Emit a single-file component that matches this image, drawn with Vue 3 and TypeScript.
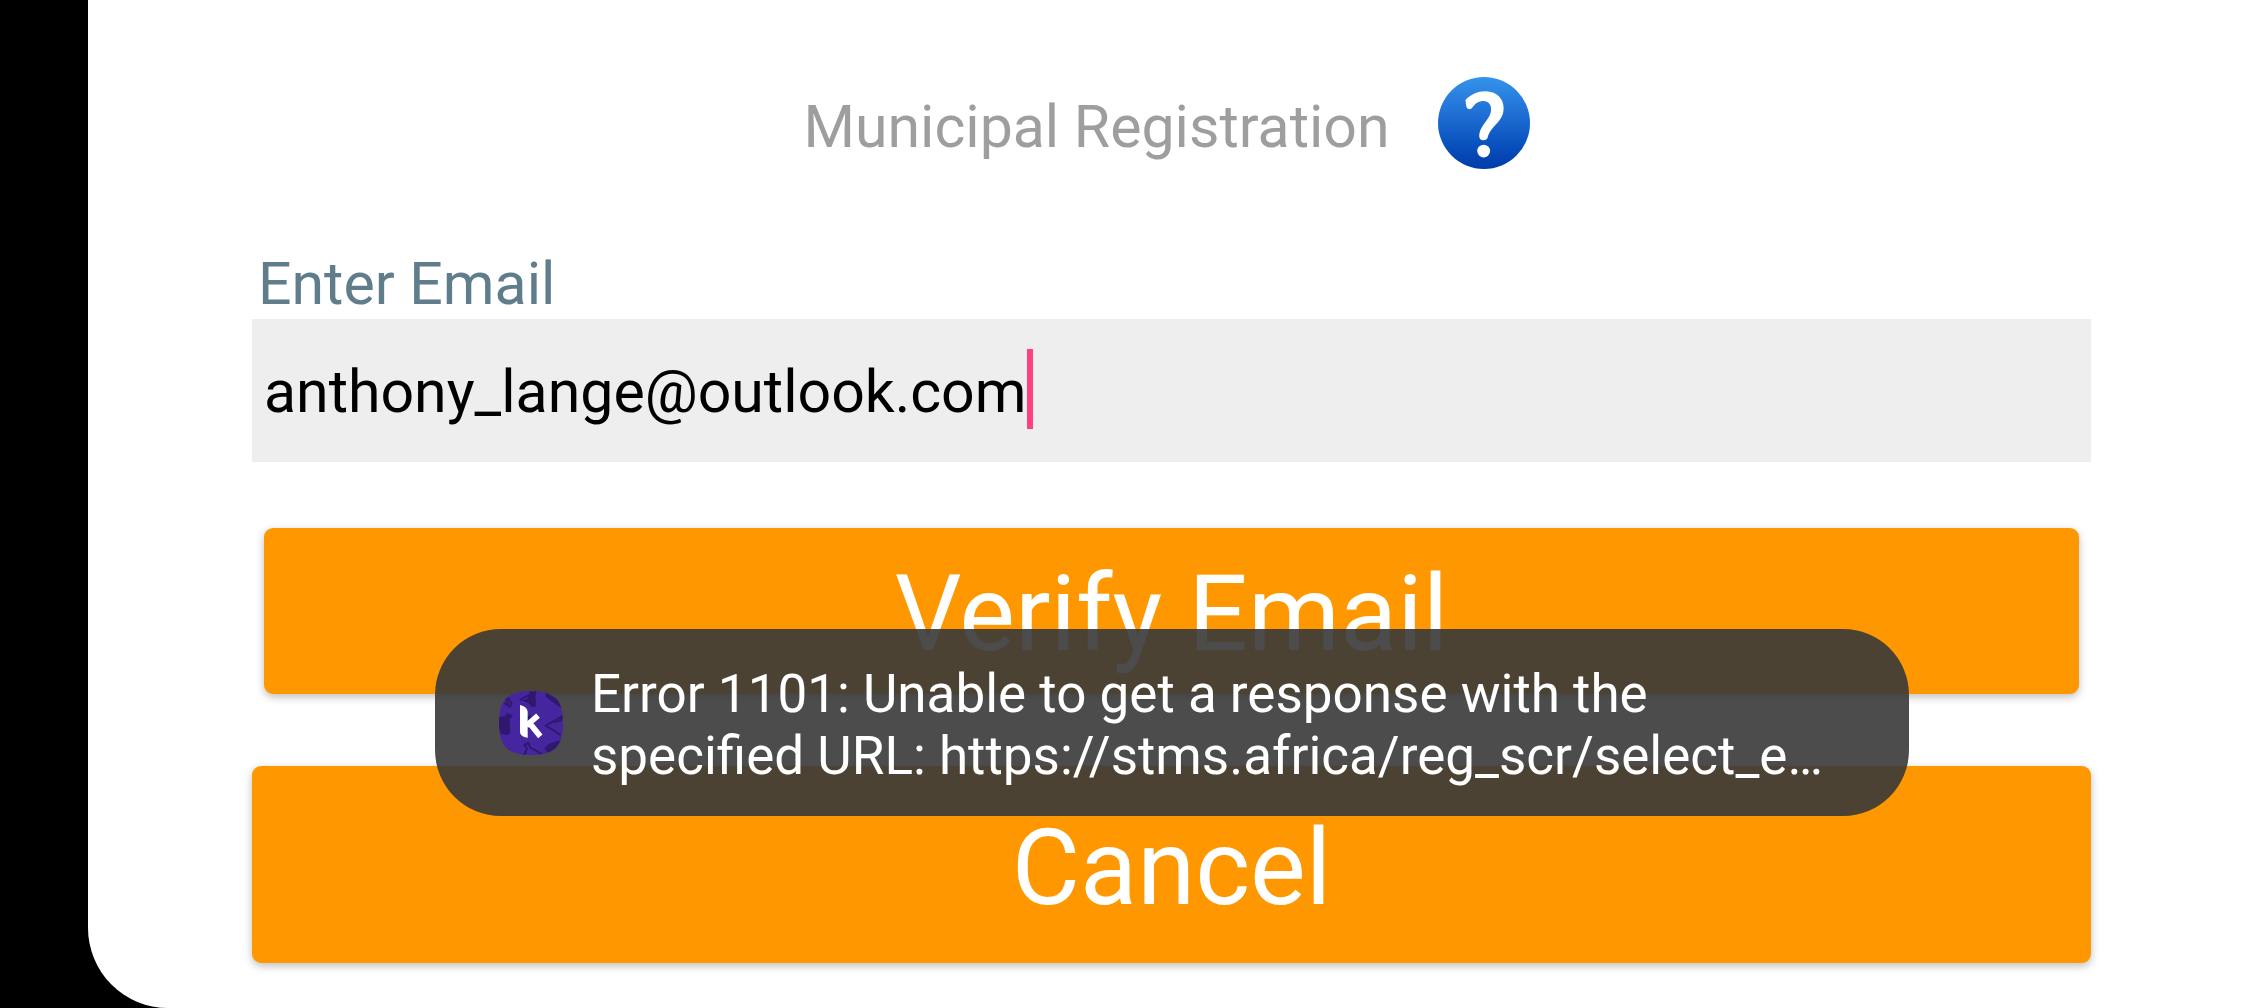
<script setup lang="ts">
import { ref } from 'vue'

const email = ref<string>('anthony_lange@outlook.com')
const toast = ref<string>(
  'Error 1101: Unable to get a response with the specified URL: https://stms.africa/reg_scr/select_e…',
)
</script>

<template>
  <div class="device">
    <main class="screen">
      <header class="heading">
        <h1 class="title">Municipal Registration</h1>
        <button class="help" type="button" aria-label="Help">
          <svg viewBox="0 0 272 272" aria-hidden="true">
            <defs>
              <linearGradient id="help-fill" x1="0" y1="0" x2="0" y2="1">
                <stop offset="0" stop-color="#3493ea" />
                <stop offset="0.35" stop-color="#2274d8" />
                <stop offset="0.75" stop-color="#0850bd" />
                <stop offset="1" stop-color="#003ca8" />
              </linearGradient>
            </defs>
            <circle cx="136" cy="136" r="136" fill="url(#help-fill)" />
            <path
              fill="#fff"
              d="M81 68C98 50 120 41 142 42C172 43 194 62 194 92C194 134 158 142 147 178C145 190 121 190 122 176C122 140 156 128 157 95C157 78 146 70 132 71C118 72 109 80 101 91C96 98 86 96 84 88Z"
            />
            <circle cx="135" cy="219" r="19" fill="#fff" />
          </svg>
        </button>
      </header>

      <form class="form" @submit.prevent>
        <label class="label" for="email">Enter Email</label>
        <div class="field">
          <input id="email" v-model="email" class="input" type="text" autocomplete="off" spellcheck="false" />
          <span class="caret"></span>
        </div>
        <button class="button verify" type="submit">Verify Email</button>
        <button class="button cancel" type="button">Cancel</button>
      </form>

      <div class="toast" role="alert">
        <svg class="logo" viewBox="0 0 192 192" aria-hidden="true">
          <defs>
            <clipPath id="logo-shape">
              <path d="M96 0C166 0 192 26 192 96S166 192 96 192S0 166 0 96S26 0 96 0Z" />
            </clipPath>
          </defs>
          <g clip-path="url(#logo-shape)">
            <rect width="192" height="192" fill="#45269f" />
            <g fill="#301870">
              <path d="M0 78L18 76L22 66L40 72L38 80L32 84L34 122L28 132L6 128L0 116Z" />
              <path d="M86 24L92 2L112 0L108 24L112 46L98 48L88 36L68 28Z" />
              <path d="M140 4L184 30L188 52L176 44L140 18Z" />
              <path d="M136 172L150 158L186 146L180 180L150 192Z" />
              <path d="M60 84L72 82L96 72L100 104L84 118L74 110Z" />
            </g>
            <g fill="none" stroke="#301870" stroke-width="6" stroke-linecap="round" stroke-linejoin="round">
              <path d="M22 24L28 44L18 38M28 22L38 38L32 48" />
              <path d="M64 26L104 6M104 6L108 32" />
              <path d="M190 76L140 104L182 130M158 94L182 90L188 84" />
              <path d="M76 192L84 172L76 162L88 156L94 170L130 190" />
            </g>
            <path fill="#fff" d="M63 42C76 45 86 52 86 64V140C72 139 63 133 63 121Z" />
            <path fill="none" stroke="#fff" stroke-width="17" d="M82 104L117 74M88 92L124 136" />
          </g>
        </svg>
        <p class="message">{{ toast }}</p>
      </div>
    </main>
  </div>
</template>

<style>
body {
  margin: 0;
  background: #000;
}
</style>

<style scoped>
.device {
  padding-left: 88px;
  background: #000;
  font-family: Roboto, 'Liberation Sans', sans-serif;
}

.screen {
  position: relative;
  box-sizing: border-box;
  min-height: 100vh;
  padding: 77px 165px 45px 164px;
  border-bottom-left-radius: 80px;
  background: #fff;
}

.heading {
  display: flex;
  justify-content: center;
  align-items: center;
  gap: 48px;
  padding-right: 10px;
}

.title {
  margin: 0;
  padding-top: 8px;
  color: #9e9e9e;
  font-size: 59px;
  font-weight: 400;
  line-height: 70px;
}

.help {
  width: 92px;
  height: 92px;
  padding: 0;
  border: 0;
  background: none;
}

.help svg {
  display: block;
  width: 100%;
  height: 100%;
}

.form {
  display: flex;
  flex-direction: column;
  margin-top: 80px;
}

.label {
  padding-left: 6px;
  color: #607d8b;
  font-size: 59px;
  line-height: 70px;
}

.field {
  display: flex;
  align-items: center;
  box-sizing: border-box;
  height: 143px;
  padding: 0 12px 3px;
  background: #eee;
}

.input {
  box-sizing: border-box;
  field-sizing: content;
  height: 80px;
  padding: 4px 0 0;
  border: 0;
  outline: 0;
  background: none;
  color: #000;
  caret-color: transparent;
  font: 400 59px/70px Roboto, 'Liberation Sans', sans-serif;
}

.caret {
  flex: none;
  width: 6px;
  height: 80px;
  background: #ff4081;
}

.button {
  padding: 8px 0 0;
  border: 0;
  border-radius: 9px;
  background: #ff9800;
  box-shadow: 0 3px 8px rgba(0, 0, 0, 0.26);
  color: #fff;
  font: 400 105px/124px Roboto, 'Liberation Sans', sans-serif;
}

.verify {
  height: 166px;
  margin: 66px 12px 0;
}

.cancel {
  height: 197px;
  margin-top: 72px;
}

.toast {
  position: absolute;
  bottom: 192px;
  left: 50%;
  display: flex;
  align-items: center;
  gap: 28px;
  box-sizing: border-box;
  width: min(1474px, 90%);
  min-height: 187px;
  padding: 0 64px;
  border-radius: 66px;
  background: rgba(57, 57, 57, 0.9);
  transform: translateX(-50%);
}

.logo {
  flex: none;
  width: 64px;
  height: 64px;
}

.message {
  flex: 1;
  margin: 0;
  padding-top: 4px;
  color: #fff;
  font-size: 53px;
  line-height: 62px;
}
</style>
